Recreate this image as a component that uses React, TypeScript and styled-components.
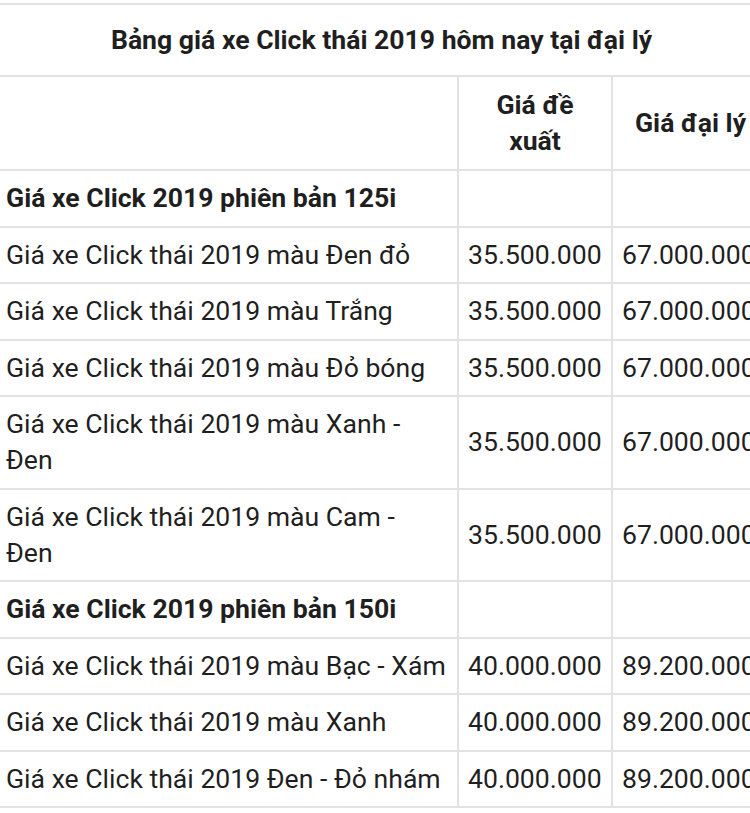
import styled, { createGlobalStyle } from 'styled-components';

const GlobalStyle = createGlobalStyle`
  html, body {
    margin: 0;
    padding: 0;
    background: #ffffff;
  }
  body {
    font-family: Roboto, "Noto Sans", "Liberation Sans", sans-serif;
    color: #1f1f1f;
  }
`;

interface PriceRow {
  name: string;
  suggested?: string;
  dealer?: string;
  group?: boolean;
}

const rows: PriceRow[] = [
  { name: 'Giá xe Click 2019 phiên bản 125i', group: true },
  { name: 'Giá xe Click thái 2019 màu Đen đỏ', suggested: '35.500.000', dealer: '67.000.000' },
  { name: 'Giá xe Click thái 2019 màu Trắng', suggested: '35.500.000', dealer: '67.000.000' },
  { name: 'Giá xe Click thái 2019 màu Đỏ bóng', suggested: '35.500.000', dealer: '67.000.000' },
  { name: 'Giá xe Click thái 2019 màu Xanh - Đen', suggested: '35.500.000', dealer: '67.000.000' },
  { name: 'Giá xe Click thái 2019 màu Cam - Đen', suggested: '35.500.000', dealer: '67.000.000' },
  { name: 'Giá xe Click 2019 phiên bản 150i', group: true },
  { name: 'Giá xe Click thái 2019 màu Bạc - Xám', suggested: '40.000.000', dealer: '89.200.000' },
  { name: 'Giá xe Click thái 2019 màu Xanh', suggested: '40.000.000', dealer: '89.200.000' },
  { name: 'Giá xe Click thái 2019 Đen - Đỏ nhám', suggested: '40.000.000', dealer: '89.200.000' },
];

export default function App(): JSX.Element {
  return (
    <>
      <GlobalStyle />
      <Page>
        <Table>
          <colgroup>
            <col style={{ width: 464 }} />
            <col style={{ width: 154 }} />
            <col style={{ width: 157 }} />
          </colgroup>
          <tbody>
            <tr>
              <TitleCell colSpan={3}>
                Bảng giá xe Click thái 2019 hôm nay tại đại lý
              </TitleCell>
            </tr>
            <tr>
              <HeadCell />
              <HeadCell>
                Giá đề
                <br />
                xuất
              </HeadCell>
              <HeadCell>Giá đại lý</HeadCell>
            </tr>
            {rows.map((row) => (
              <tr key={row.name}>
                <NameCell $bold={row.group}>{row.name}</NameCell>
                <Cell>{row.suggested}</Cell>
                <Cell>{row.dealer}</Cell>
              </tr>
            ))}
          </tbody>
        </Table>
      </Page>
    </>
  );
}

const Page = styled.div`
  width: 750px;
  overflow: hidden;
  padding-top: 3px;
`;

const Table = styled.table`
  border-collapse: collapse;
  table-layout: fixed;
  width: 775px;
  margin-left: -7px;
  font-size: 26.6px;
  line-height: 36px;
`;

const Cell = styled.td`
  border: 2px solid #e2e2e2;
  padding: 9.25px 9px;
  vertical-align: middle;
  white-space: nowrap;
`;

const NameCell = styled(Cell)<{ $bold?: boolean }>`
  white-space: normal;
  padding-left: 11px;
  font-weight: ${(p) => (p.$bold ? 700 : 400)};
`;

const HeadCell = styled(Cell)`
  font-weight: 700;
  text-align: center;
  padding: 10px 9px;
`;

const TitleCell = styled(Cell)`
  font-weight: 700;
  text-align: center;
  padding: 17px 9px;
`;
